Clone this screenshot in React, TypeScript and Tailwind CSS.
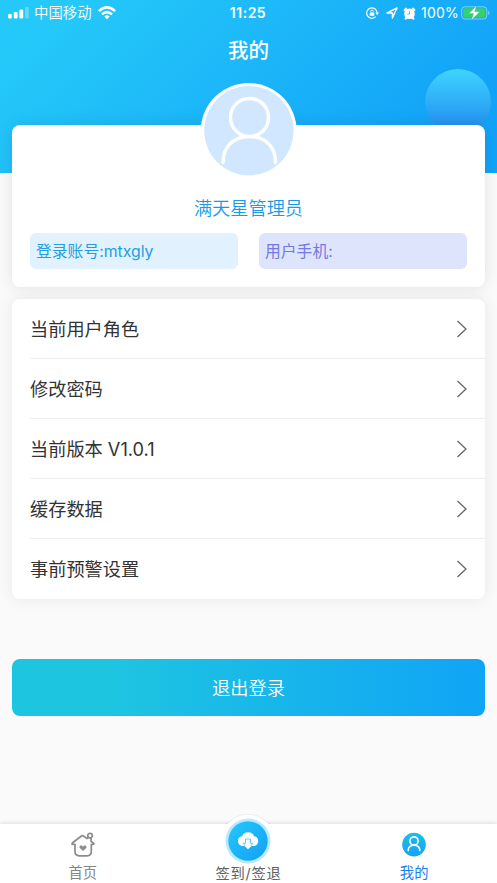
const menu = ["当前用户角色", "修改密码", "当前版本 V1.0.1", "缓存数据", "事前预警设置"];

function StatusBar() {
  return (
    <div className="flex h-[26px] items-center px-2 text-[14px] leading-[26px]">
      <div className="flex w-[220px] items-center">
        <svg width="22" height="12" viewBox="0 0 22 12" fill="#fff" aria-hidden>
          <rect x="0" y="7" width="3.8" height="4.5" rx="1" />
          <rect x="5.8" y="5" width="3.8" height="6.5" rx="1" />
          <rect x="11.4" y="2.6" width="3.8" height="8.9" rx="1" />
          <rect x="17" y="0" width="3.8" height="11.5" rx="1" opacity="0.3" />
        </svg>
        <span className="ml-1 text-[14.4px] font-[350]">中国移动</span>
        <svg className="ml-[6px]" width="18" height="14" viewBox="0 0 18 14" fill="none" stroke="#fff" strokeWidth="2.5" aria-hidden>
          <path d="M0.9 5.2 Q9 -2.4 17.1 5.2" />
          <path d="M3.9 8.4 Q9 3.8 14.1 8.4" />
          <path d="M6.3 10.4 Q9 8 11.7 10.4 L9 13.2Z" fill="#fff" stroke="none" />
        </svg>
      </div>
      <span className="w-[40px] text-center text-[14px] font-semibold tracking-[0.5px]">11:25</span>
      <div className="flex flex-1 items-center justify-end">
        <svg width="13" height="12" viewBox="0 0 13 12" fill="none" stroke="#fff" strokeWidth="1.2" aria-hidden>
          <path d="M9.7 9.7 A5.2 5.2 0 1 1 11.1 5.8" />
          <path d="M9.4 5.6H13L11.2 8.2Z" fill="#fff" stroke="none" />
          <rect x="3.7" y="5.4" width="4.6" height="3.3" rx=".5" fill="#fff" stroke="none" />
          <path d="M4.7 5.3V4.4a1.3 1.3 0 0 1 2.6 0v.9" strokeWidth=".9" />
        </svg>
        <svg className="ml-[7px]" width="12" height="12" viewBox="0 0 12 12" fill="none" stroke="#fff" strokeWidth="1.4" strokeLinejoin="round" aria-hidden>
          <path d="M1 6 11 1 6.4 11V6Z" />
        </svg>
        <svg className="ml-[5px]" width="13" height="13" viewBox="0 0 13 13" aria-hidden>
          <circle cx="6.5" cy="6.8" r="5.3" fill="#fff" />
          <path d="M1.7 3 3 1.7M11.3 3 10 1.7M2.6 11.6 3.5 10.8M10.4 11.6 9.5 10.8" stroke="#fff" strokeWidth="2.2" strokeLinecap="round" />
          <path d="M6.5 3.8V7H4.2" stroke="#15aff9" strokeWidth=".8" fill="none" />
        </svg>
        <span className="ml-[5px] text-[14px] font-[370] tracking-[0.2px]">100%</span>
        <svg className="ml-[2px] -mr-[2px]" width="30" height="14" viewBox="0 0 30 14" aria-hidden>
          <rect x=".6" y=".8" width="25.2" height="12.2" rx="3.3" fill="none" stroke="#fff" opacity=".45" />
          <rect x="2.2" y="2.3" width="22" height="9.2" rx="1.8" fill="#35d16b" />
          <path d="M27.2 4.8Q30 7 27.2 9Z" fill="#fff" opacity=".5" />
          <path d="M15.3 0 8 7.6h4.6L10.5 14l8.1-8.2h-4.8Z" fill="#fff" stroke="#25bfc4" strokeWidth=".3" />
        </svg>
      </div>
    </div>
  );
}

function Avatar() {
  return (
    <svg className="mx-auto -mt-[44px] block" width="98" height="98" viewBox="0 0 98 98" aria-hidden>
      <circle cx="48.7" cy="50" r="48" fill="#fff" />
      <circle cx="48.9" cy="49.6" r="44.7" fill="#d0e7ff" />
      <g fill="none" stroke="#fff" strokeWidth="3.4" strokeLinecap="round">
        <circle cx="49.5" cy="36.5" r="19" />
        <path d="M23 81.5C23 65 34.5 55.5 49.5 55.5S75.5 65 75.5 81.5" />
      </g>
    </svg>
  );
}

function MenuRow({ label }: { label: string }) {
  return (
    <li className="ml-[18px] flex h-[60px] items-center justify-between border-b border-[#eeeeee] pr-[17px] text-[18.2px] font-[370] text-[#333] last:border-0">
      <span className="pt-[2px]">{label}</span>
      <svg width="12" height="18" viewBox="0 0 12 18" fill="none" stroke="#666" strokeWidth="1.3" aria-hidden>
        <path d="m1.5 1 8.5 8-8.5 8" />
      </svg>
    </li>
  );
}

function TabBar() {
  return (
    <nav className="grid h-[59px] grid-cols-3 bg-white text-[14.3px] font-[390] text-[#858585] shadow-[0_-1px_4px_rgba(0,0,0,0.12)]">
      <div className="flex flex-col items-center pt-[8px]">
        <svg width="26" height="26" viewBox="0 0 26 26" fill="none" stroke="#8c8c8c" strokeWidth="1.7" strokeLinecap="round" strokeLinejoin="round" aria-hidden>
          <path d="M5 12.4H3.3Q.8 12.4 2.6 10.800L11.500 4Q12.500 3.300 13.500 4L17 6.600 18.300 4.800M21 6V9.300L23.200 10.900Q25 12.400 22.700 12.400H21.300V19.500Q21.300 23.800 17 23.800H9.300Q5 23.800 5 19.500V12.400" />
          <circle cx="20" cy="3.700" r="2.300" />
          <path d="M13.100 19 9.500 15.700Q9.300 13.300 11.200 13.300L12.800 14.500 14.900 13.200Q16.700 13.500 16.500 15.700Z" fill="#8c8c8c" stroke="none" />
        </svg>
        <span className="mt-[5px] leading-[20px]">首页</span>
      </div>
      <div className="flex flex-col items-center text-[#606060]">
        <svg className="-mt-[10px]" width="66" height="51" viewBox="0 -1 66 51" aria-hidden>
          <defs>
            <linearGradient id="sign" x1="0" y1="0" x2="1" y2="1">
              <stop stopColor="#25c9fa" />
              <stop offset="1" stopColor="#139ff7" />
            </linearGradient>
          </defs>
          {/* raised bump of the bar */}
          <path d="M10 9.5Q13 9 15.5 6.5C25 -2.5 41 -2.5 50.5 6.5Q53 9 56 9.5V50H10Z" fill="#fff" />
          <path d="M10 9Q13 8.5 15.5 6C25 -3 41 -3 50.5 6Q53 8.5 56 9" fill="none" stroke="#000" strokeOpacity=".05" />
          <circle cx="33" cy="26" r="22.5" fill="#b8eafd" />
          <circle cx="33" cy="26" r="19.7" fill="url(#sign)" />
          <path d="M29 31H27.5A4.9 4.9 0 0 1 27 21.3 6.7 6.7 0 0 1 39.2 21.3 4.9 4.9 0 0 1 38.7 31H37Z" fill="#fff" />
          <path d="M30.5 24V28.3H28L33 34 38 28.3H35.5V24Z" fill="#fff" stroke="#22b5f9" strokeWidth=".7" />
          <path d="M29.5 31 33 34.2 36.5 31Z" fill="#fff" />
        </svg>
        <span className="-mt-px leading-[20px] tracking-[0.7px]">签到/签退</span>
      </div>
      <div className="flex flex-col items-center pt-[8px] text-[#197fe8]">
        <svg width="26" height="26" viewBox="0 0 26 26" aria-hidden>
          <defs>
            <linearGradient id="mine" x1="0" y1="0" x2="0" y2="1">
              <stop stopColor="#1dbde9" />
              <stop offset="1" stopColor="#15a2f5" />
            </linearGradient>
          </defs>
          <circle cx="13" cy="12.6" r="11.8" fill="url(#mine)" />
          <g fill="none" stroke="#fff" strokeWidth="1.6" strokeLinecap="round">
            <circle cx="13" cy="9" r="4.1" />
            <path d="M7.2 18.6Q7.2 13.2 13 13.2T18.8 18.6" />
          </g>
        </svg>
        <span className="mt-[5px] leading-[20px] font-normal">我的</span>
      </div>
    </nav>
  );
}

export default function App() {
  return (
    <div className="flex h-[883px] w-[497px] flex-col overflow-hidden bg-[#fafafa] font-['Inter','Noto_Sans_CJK_SC',sans-serif]">
      <header className="relative h-[173px] shrink-0 bg-[linear-gradient(135deg,#25c9f9_10%,#12a3f8_85%)] text-white">
        {/* decorative bubble behind the card */}
        <div className="absolute top-[69px] left-[425px] h-[66px] w-[66px] rounded-full bg-linear-to-b from-[#40d4ff] to-[#2387ed]" />
        <StatusBar />
        <h1 className="pt-px text-center text-[20.5px] leading-[48px] font-medium">我的</h1>
      </header>

      <main className="relative -mt-12 flex-1 px-3">
        <section className="flow-root h-[162px] rounded-lg bg-white shadow-[0_0_16px_rgba(0,0,0,0.1)]">
          <Avatar />
          <p className="mt-[16px] text-center text-[18.2px] leading-[26px] font-[350] text-[#189be5]">满天星管理员</p>
          <div className="mt-[12px] grid grid-cols-2 gap-[21px] px-[18px] text-[15.8px] leading-[37px] font-[370]">
            <div className="h-9 rounded-md bg-[#e1f2fe] px-[6px] text-[#229fe3]">登录账号:mtxgly</div>
            <div className="h-9 rounded-md bg-[#dfe4fd] px-[6px] text-[#7478df]">用户手机:</div>
          </div>
        </section>

        <ul className="mt-3 h-[300px] rounded-lg bg-white shadow-[0_0_16px_rgba(0,0,0,0.08)]">
          {menu.map((label) => (
            <MenuRow key={label} label={label} />
          ))}
        </ul>

        <button className="mt-[60px] block h-[57px] w-full rounded-lg bg-[linear-gradient(90deg,#1ec5e0_20%,#10a4f6)] pt-[2px] text-[18.2px] font-[350] text-white">
          退出登录
        </button>
      </main>

      <TabBar />
    </div>
  );
}
